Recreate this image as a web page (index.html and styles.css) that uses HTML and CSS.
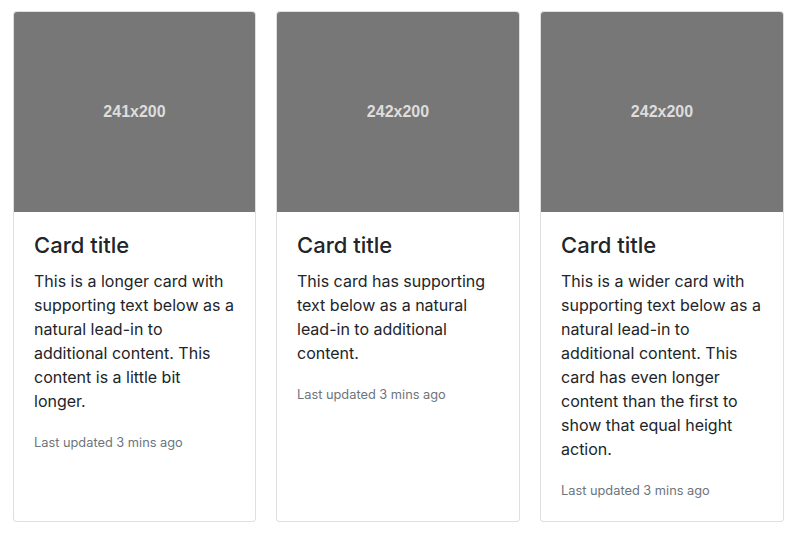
FILE: index.html
```html
<!DOCTYPE html>
<html>
<head>
<meta charset="utf-8">
<link rel="stylesheet" href="styles.css">
</head>
<body>
<div class="card-deck">
  <div class="card">
    <div class="card-img"><span>241x200</span></div>
    <div class="card-body">
      <h5 class="card-title">Card title</h5>
      <p class="card-text">This is a longer card with supporting text below as a natural lead-in to additional content. This content is a little bit longer.</p>
      <p class="card-text last"><small class="muted">Last updated 3 mins ago</small></p>
    </div>
  </div>
  <div class="card">
    <div class="card-img"><span>242x200</span></div>
    <div class="card-body">
      <h5 class="card-title">Card title</h5>
      <p class="card-text">This card has supporting text below as a natural lead-in to additional content.</p>
      <p class="card-text last"><small class="muted">Last updated 3 mins ago</small></p>
    </div>
  </div>
  <div class="card">
    <div class="card-img"><span>242x200</span></div>
    <div class="card-body">
      <h5 class="card-title">Card title</h5>
      <p class="card-text">This is a wider card with supporting text below as a natural lead-in to additional content. This card has even longer content than the first to show that equal height action.</p>
      <p class="card-text last"><small class="muted">Last updated 3 mins ago</small></p>
    </div>
  </div>
</div>
</body>
</html>
```
FILE: styles.css
```css
* { box-sizing: border-box; }
html, body { margin: 0; background: #fff; }
body {
  padding: 11px 11px 0 13px;
  font-family: Inter, "Helvetica Neue", Arial, sans-serif;
  font-size: 16px;
  line-height: 1.5;
  color: #212529;
}
.card-deck {
  display: grid;
  grid-template-columns: 243fr 244fr 244fr;
  gap: 20px;
}
.card {
  display: flex;
  flex-direction: column;
  border: 1px solid rgba(0,0,0,.125);
  border-radius: 4px;
  background: #fff;
}
.card-img {
  height: 200px;
  background: #777;
  border-radius: 3px 3px 0 0;
  display: flex;
  align-items: center;
  justify-content: center;
  color: #dddddd;
  font-family: "Liberation Sans", Arial, sans-serif;
  font-size: 16px;
  font-weight: bold;
}
.card-body {
  flex: 1 1 auto;
  padding: 20px;
}
.card-title {
  margin: 0 0 11px;
  font-size: 22px;
  font-weight: 500;
  line-height: 26px;
}
.card-text { margin: 0 0 16px; }
.card-text.last { margin-bottom: 0; }
.muted { color: #6c757d; font-size: 80%; }
```
